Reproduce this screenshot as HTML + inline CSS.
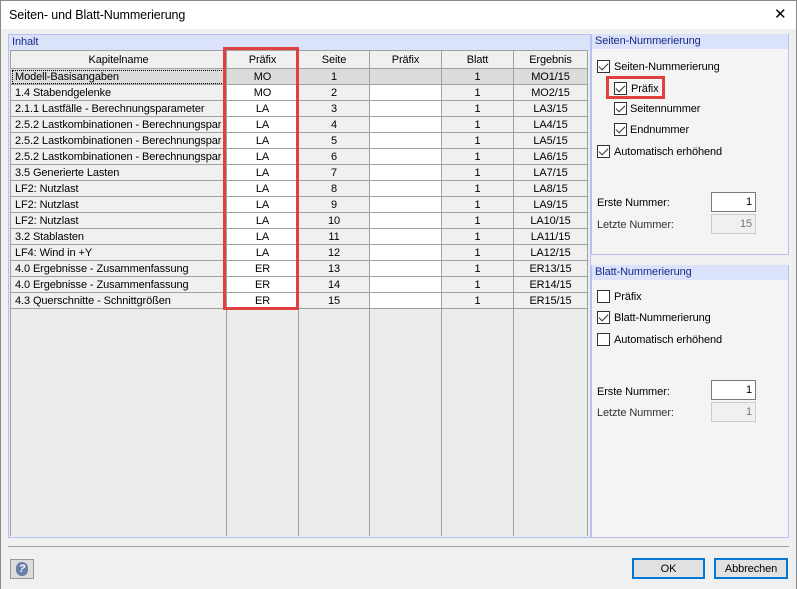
<!DOCTYPE html><html><head><meta charset="utf-8"><style>
*{box-sizing:border-box;margin:0;padding:0}
body{width:797px;height:589px;overflow:hidden;background:#f0f0f0;font-family:"Liberation Sans",sans-serif;font-size:11px;color:#000;position:relative;letter-spacing:-0.1px}
.a{position:absolute}
.title{left:0;top:0;width:797px;height:29px;background:#fff;border:1px solid #888;border-bottom:none}
.title span{position:absolute;left:8px;top:7px;font-size:12.5px}
table{border-collapse:collapse;table-layout:fixed}
td{height:16px;border:1px solid #a0a0a0;text-align:center;padding:0;line-height:14px;white-space:nowrap;overflow:hidden}
td.k{text-align:left;padding-left:4px;background:#f0f0f0}
td.g{background:#f0f0f0}
td.w{background:#fff}
tr.h td{height:18px;background:#f0f0f0}
tr.s td{background:#dcdcdc}
.hdr{background:#dae3f9;color:#1a2a8a;height:15px;padding-left:3px;line-height:15px}
.cb{position:absolute;width:13px;height:13px;border:1px solid #333;background:#fff}
.cb.c::after{content:"";position:absolute;left:3px;top:0px;width:4px;height:8px;border:solid #333;border-width:0 1.5px 1.5px 0;transform:rotate(45deg)}
.lb{position:absolute;line-height:13px}
.inp{position:absolute;width:45px;height:20px;border:1px solid #7a7a7a;background:#fff;text-align:right;padding-right:3px;line-height:18px}
.inp.d{background:#f0f0f0;border-color:#ccc;color:#777}
.btn{position:absolute;height:21px;border:2px solid #0078d7;background:#e1e1e1;text-align:center;line-height:18px}
</style></head><body>
<div class="a title"><span>Seiten- und Blatt-Nummerierung</span><span style="left:773px;top:4px;font-size:15px;font-weight:normal">✕</span></div>
<div class="a" style="left:0;top:29px;width:1px;height:560px;background:#888"></div>
<div class="a" style="left:796px;top:29px;width:1px;height:560px;background:#888"></div>

<div class="a" style="left:8px;top:34px;width:583px;height:504px;border:1px solid #b8c0f0;background:#ebeded;overflow:hidden">
<div class="hdr">Inhalt</div>
<table style="width:577px;margin-left:1px">
<colgroup><col style="width:216px"><col style="width:72px"><col style="width:71px"><col style="width:72px"><col style="width:72px"><col style="width:74px"></colgroup>
<tr class="h"><td>Kapitelname</td><td>Präfix</td><td>Seite</td><td>Präfix</td><td>Blatt</td><td>Ergebnis</td></tr>
<tr class="s"><td class="k" style="outline:1px dotted #000;outline-offset:-2px">Modell-Basisangaben</td><td>MO</td><td>1</td><td></td><td>1</td><td>MO1/15</td></tr>
<tr><td class="k">1.4 Stabendgelenke</td><td class="w">MO</td><td class="g">2</td><td class="w"></td><td class="g">1</td><td class="g">MO2/15</td></tr>
<tr><td class="k">2.1.1 Lastfälle - Berechnungsparameter</td><td class="w">LA</td><td class="g">3</td><td class="w"></td><td class="g">1</td><td class="g">LA3/15</td></tr>
<tr><td class="k">2.5.2 Lastkombinationen - Berechnungspar</td><td class="w">LA</td><td class="g">4</td><td class="w"></td><td class="g">1</td><td class="g">LA4/15</td></tr>
<tr><td class="k">2.5.2 Lastkombinationen - Berechnungspar</td><td class="w">LA</td><td class="g">5</td><td class="w"></td><td class="g">1</td><td class="g">LA5/15</td></tr>
<tr><td class="k">2.5.2 Lastkombinationen - Berechnungspar</td><td class="w">LA</td><td class="g">6</td><td class="w"></td><td class="g">1</td><td class="g">LA6/15</td></tr>
<tr><td class="k">3.5 Generierte Lasten</td><td class="w">LA</td><td class="g">7</td><td class="w"></td><td class="g">1</td><td class="g">LA7/15</td></tr>
<tr><td class="k">LF2: Nutzlast</td><td class="w">LA</td><td class="g">8</td><td class="w"></td><td class="g">1</td><td class="g">LA8/15</td></tr>
<tr><td class="k">LF2: Nutzlast</td><td class="w">LA</td><td class="g">9</td><td class="w"></td><td class="g">1</td><td class="g">LA9/15</td></tr>
<tr><td class="k">LF2: Nutzlast</td><td class="w">LA</td><td class="g">10</td><td class="w"></td><td class="g">1</td><td class="g">LA10/15</td></tr>
<tr><td class="k">3.2 Stablasten</td><td class="w">LA</td><td class="g">11</td><td class="w"></td><td class="g">1</td><td class="g">LA11/15</td></tr>
<tr><td class="k">LF4: Wind in +Y</td><td class="w">LA</td><td class="g">12</td><td class="w"></td><td class="g">1</td><td class="g">LA12/15</td></tr>
<tr><td class="k">4.0 Ergebnisse - Zusammenfassung</td><td class="w">ER</td><td class="g">13</td><td class="w"></td><td class="g">1</td><td class="g">ER13/15</td></tr>
<tr><td class="k">4.0 Ergebnisse - Zusammenfassung</td><td class="w">ER</td><td class="g">14</td><td class="w"></td><td class="g">1</td><td class="g">ER14/15</td></tr>
<tr><td class="k">4.3 Querschnitte - Schnittgrößen</td><td class="w">ER</td><td class="g">15</td><td class="w"></td><td class="g">1</td><td class="g">ER15/15</td></tr>
<tr><td style="height:227px;border-bottom:none"></td><td style="border-bottom:none"></td><td style="border-bottom:none"></td><td style="border-bottom:none"></td><td style="border-bottom:none"></td><td style="border-bottom:none"></td></tr>
</table>
</div>
<div class="a" style="left:223px;top:47px;width:76px;height:263px;border:3px solid #e04040"></div>

<div class="a" style="left:591px;top:34px;width:198px;height:221px;border:1px solid #b8c0f0;border-top:none;background:#f4f4f4"><div class="hdr">Seiten-Nummerierung</div></div>
<div class="cb c" style="left:597px;top:60px"></div><div class="lb" style="left:614px;top:61px">Seiten-Nummerierung</div>
<div class="cb c" style="left:614px;top:82px"></div><div class="lb" style="left:631px;top:83px">Präfix</div>
<div class="a" style="left:606px;top:76px;width:59px;height:23px;border:3px solid #e04040"></div>
<div class="cb c" style="left:614px;top:102px"></div><div class="lb" style="left:630px;top:103px">Seitennummer</div>
<div class="cb c" style="left:614px;top:123px"></div><div class="lb" style="left:630px;top:124px">Endnummer</div>
<div class="cb c" style="left:597px;top:145px"></div><div class="lb" style="left:614px;top:146px">Automatisch erhöhend</div>
<div class="lb" style="left:597px;top:197px">Erste Nummer:</div><div class="inp" style="left:711px;top:192px">1</div>
<div class="lb" style="left:597px;top:219px;color:#333">Letzte Nummer:</div><div class="inp d" style="left:711px;top:214px">15</div>

<div class="a" style="left:591px;top:265px;width:198px;height:273px;border:1px solid #b8c0f0;border-top:none;background:#f4f4f4"><div class="hdr">Blatt-Nummerierung</div></div>
<div class="cb" style="left:597px;top:290px"></div><div class="lb" style="left:614px;top:291px">Präfix</div>
<div class="cb c" style="left:597px;top:311px"></div><div class="lb" style="left:614px;top:312px">Blatt-Nummerierung</div>
<div class="cb" style="left:597px;top:333px"></div><div class="lb" style="left:614px;top:334px">Automatisch erhöhend</div>
<div class="lb" style="left:597px;top:386px">Erste Nummer:</div><div class="inp" style="left:711px;top:380px">1</div>
<div class="lb" style="left:597px;top:407px;color:#333">Letzte Nummer:</div><div class="inp d" style="left:711px;top:402px">1</div>

<div class="a" style="left:8px;top:546px;width:781px;height:1px;background:#a0a0a0"></div>
<div class="a" style="left:10px;top:559px;width:24px;height:20px;border:1px solid #999;background:#dcdcdc"><div class="a" style="left:5px;top:2px;width:12px;height:14px;border-radius:6px;background:#6a7fa8;color:#fff;text-align:center;font-weight:bold;font-style:italic;font-size:11px;line-height:14px">?</div></div>
<div class="btn" style="left:632px;top:558px;width:73px">OK</div>
<div class="btn" style="left:714px;top:558px;width:74px">Abbrechen</div>
</body></html>
